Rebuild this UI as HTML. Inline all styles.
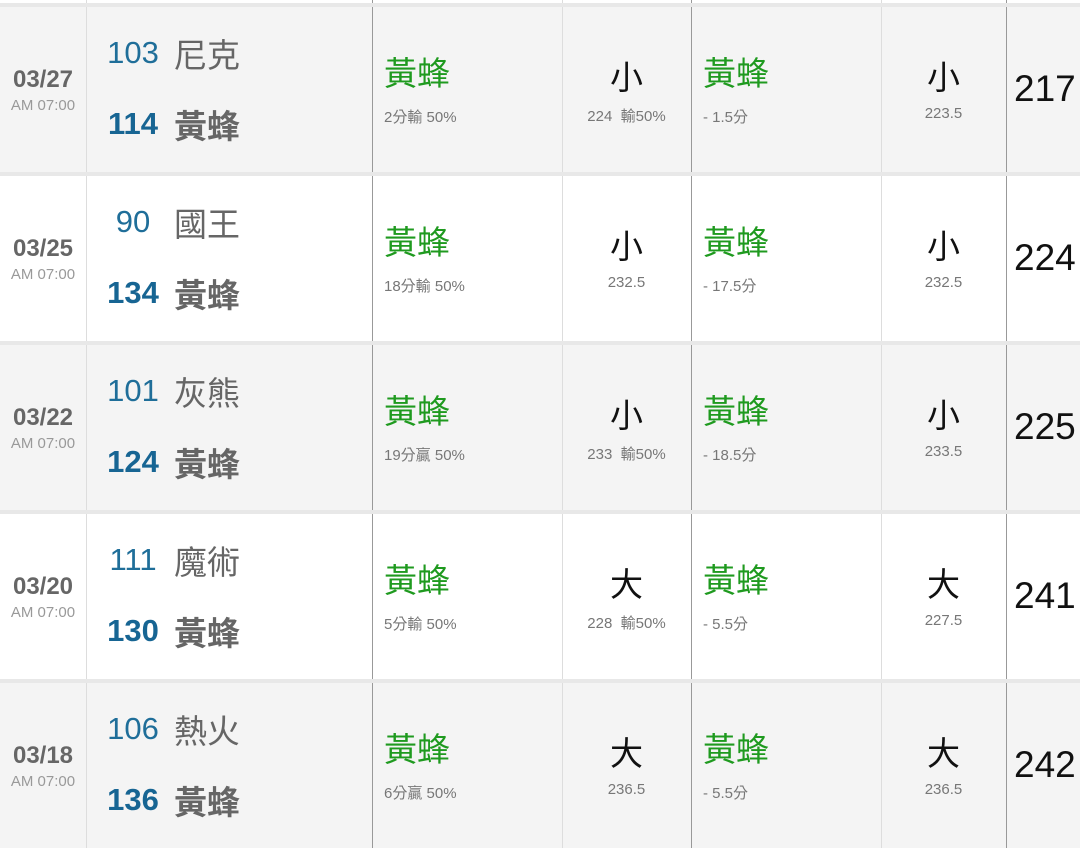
<!DOCTYPE html>
<html><head><meta charset="utf-8"><style>
*{margin:0;padding:0;box-sizing:border-box}
body{width:1080px;height:828px;overflow:hidden;background:#e8e8e8;font-family:"Liberation Sans","Noto Sans CJK TC",sans-serif;position:relative}
.row{position:absolute;left:0;width:1080px;height:165px}
.g{background:#f4f4f4}.w{background:#fff}
.row div{position:absolute;white-space:nowrap}
.vl{top:0;bottom:0;width:1px}
.date{left:0;width:86px;text-align:center;top:59px;font-size:24px;font-weight:bold;color:#666}
.time{left:0;width:86px;text-align:center;top:90px;font-size:15px;color:#999}
.s1{left:100px;width:66px;text-align:center;top:28px;font-size:31px;color:#1f6e99}
.s2{left:100px;width:66px;text-align:center;top:99px;font-size:31px;font-weight:bold;color:#176593}
.t1{left:174px;top:31px;font-size:33px;color:#666;line-height:36px}
.t2{left:174px;top:102px;font-size:33px;font-weight:bold;color:#666;line-height:36px}
.gr{top:48px;font-size:33px;color:#1f9a1f;line-height:38px}
.sub{top:99px;font-size:15px;color:#777}
.big{top:52px;font-size:33px;color:#111;text-align:center;line-height:38px}
.c4{left:562px;width:129px}.c6{left:881px;width:125px}
.subc{top:98px;font-size:15px;color:#777;text-align:center}
.tot{left:1014px;top:61px;font-size:37px;color:#111}
</style></head><body>

<div class="row w" style="top:-162px">
<div class="vl" style="left:86px;background:#ddd"></div><div class="vl" style="left:372px;background:#999"></div><div class="vl" style="left:562px;background:#ddd"></div><div class="vl" style="left:691px;background:#999"></div><div class="vl" style="left:881px;background:#ddd"></div><div class="vl" style="left:1006px;background:#999"></div>
</div>

<div class="row g" style="top:7px">
<div class="vl" style="left:86px;background:#ddd"></div><div class="vl" style="left:372px;background:#999"></div><div class="vl" style="left:562px;background:#ddd"></div><div class="vl" style="left:691px;background:#999"></div><div class="vl" style="left:881px;background:#ddd"></div><div class="vl" style="left:1006px;background:#999"></div>
<div class="date">03/27</div><div class="time">AM 07:00</div>
<div class="s1">103</div><div class="t1">尼克</div>
<div class="s2">114</div><div class="t2">黃蜂</div>
<div class="gr" style="left:384px">黃蜂</div><div class="sub" style="left:384px">2分輸 50%</div>
<div class="big c4">小</div><div class="subc c4">224&nbsp; 輸50%</div>
<div class="gr" style="left:703px">黃蜂</div><div class="sub" style="left:703px">- 1.5分</div>
<div class="big c6">小</div><div class="subc c6">223.5</div>
<div class="tot">217</div>
</div>

<div class="row w" style="top:176px">
<div class="vl" style="left:86px;background:#ddd"></div><div class="vl" style="left:372px;background:#999"></div><div class="vl" style="left:562px;background:#ddd"></div><div class="vl" style="left:691px;background:#999"></div><div class="vl" style="left:881px;background:#ddd"></div><div class="vl" style="left:1006px;background:#999"></div>
<div class="date">03/25</div><div class="time">AM 07:00</div>
<div class="s1">90</div><div class="t1">國王</div>
<div class="s2">134</div><div class="t2">黃蜂</div>
<div class="gr" style="left:384px">黃蜂</div><div class="sub" style="left:384px">18分輸 50%</div>
<div class="big c4">小</div><div class="subc c4">232.5</div>
<div class="gr" style="left:703px">黃蜂</div><div class="sub" style="left:703px">- 17.5分</div>
<div class="big c6">小</div><div class="subc c6">232.5</div>
<div class="tot">224</div>
</div>

<div class="row g" style="top:345px">
<div class="vl" style="left:86px;background:#ddd"></div><div class="vl" style="left:372px;background:#999"></div><div class="vl" style="left:562px;background:#ddd"></div><div class="vl" style="left:691px;background:#999"></div><div class="vl" style="left:881px;background:#ddd"></div><div class="vl" style="left:1006px;background:#999"></div>
<div class="date">03/22</div><div class="time">AM 07:00</div>
<div class="s1">101</div><div class="t1">灰熊</div>
<div class="s2">124</div><div class="t2">黃蜂</div>
<div class="gr" style="left:384px">黃蜂</div><div class="sub" style="left:384px">19分贏 50%</div>
<div class="big c4">小</div><div class="subc c4">233&nbsp; 輸50%</div>
<div class="gr" style="left:703px">黃蜂</div><div class="sub" style="left:703px">- 18.5分</div>
<div class="big c6">小</div><div class="subc c6">233.5</div>
<div class="tot">225</div>
</div>

<div class="row w" style="top:514px">
<div class="vl" style="left:86px;background:#ddd"></div><div class="vl" style="left:372px;background:#999"></div><div class="vl" style="left:562px;background:#ddd"></div><div class="vl" style="left:691px;background:#999"></div><div class="vl" style="left:881px;background:#ddd"></div><div class="vl" style="left:1006px;background:#999"></div>
<div class="date">03/20</div><div class="time">AM 07:00</div>
<div class="s1">111</div><div class="t1">魔術</div>
<div class="s2">130</div><div class="t2">黃蜂</div>
<div class="gr" style="left:384px">黃蜂</div><div class="sub" style="left:384px">5分輸 50%</div>
<div class="big c4">大</div><div class="subc c4">228&nbsp; 輸50%</div>
<div class="gr" style="left:703px">黃蜂</div><div class="sub" style="left:703px">- 5.5分</div>
<div class="big c6">大</div><div class="subc c6">227.5</div>
<div class="tot">241</div>
</div>

<div class="row g" style="top:683px">
<div class="vl" style="left:86px;background:#ddd"></div><div class="vl" style="left:372px;background:#999"></div><div class="vl" style="left:562px;background:#ddd"></div><div class="vl" style="left:691px;background:#999"></div><div class="vl" style="left:881px;background:#ddd"></div><div class="vl" style="left:1006px;background:#999"></div>
<div class="date">03/18</div><div class="time">AM 07:00</div>
<div class="s1">106</div><div class="t1">熱火</div>
<div class="s2">136</div><div class="t2">黃蜂</div>
<div class="gr" style="left:384px">黃蜂</div><div class="sub" style="left:384px">6分贏 50%</div>
<div class="big c4">大</div><div class="subc c4">236.5</div>
<div class="gr" style="left:703px">黃蜂</div><div class="sub" style="left:703px">- 5.5分</div>
<div class="big c6">大</div><div class="subc c6">236.5</div>
<div class="tot">242</div>
</div>

</body></html>
